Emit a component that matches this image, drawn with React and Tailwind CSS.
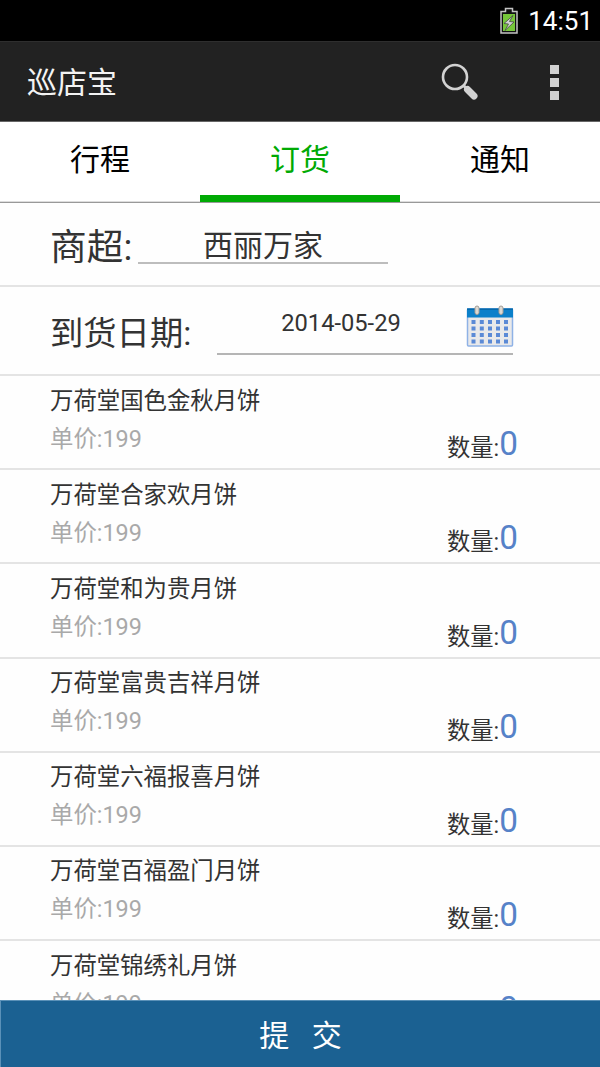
const products = [
  '万荷堂国色金秋月饼',
  '万荷堂合家欢月饼',
  '万荷堂和为贵月饼',
  '万荷堂富贵吉祥月饼',
  '万荷堂六福报喜月饼',
  '万荷堂百福盈门月饼',
  '万荷堂锦绣礼月饼',
];

function Battery() {
  return (
    <svg width="20" height="28" viewBox="0 0 20 28">
      <path d="M6.500 1.500h7v3h4.500v21.500h-16V4.500h4.500z" fill="#111" stroke="#c4c4c4" strokeWidth="1.500" />
      <path d="M4 7h12v17H4z" fill="#76c63a" />
      <path d="M14 8.500 5 16.500l4.500.5-3.500 6.500 9-8.500-4.500-.5z" fill="#d2d2d2" stroke="#444" strokeWidth=".8" />
    </svg>
  );
}

function SearchIcon() {
  return (
    <svg width="40" height="40" viewBox="0 0 40 40" fill="none">
      <circle cx="15" cy="15" r="12" stroke="#d2d2d2" strokeWidth="2.600" />
      <path d="m23 23 4 4" stroke="#d2d2d2" strokeWidth="3" />
      <path d="m27.500 27.500 6.500 6.500" stroke="#d2d2d2" strokeWidth="7" strokeLinecap="round" />
    </svg>
  );
}

function CalendarIcon() {
  return (
    <svg width="48" height="44" viewBox="0 0 48 44">
      <rect x="1.500" y="4" width="45" height="37" rx="1" fill="#e9e9ea" stroke="#8fb2e6" strokeWidth="1.500" />
      <path d="M1 3.500h46v9H1z" fill="#0b80ca" />
      <path d="M1 3.500h46v1.500H1z" fill="#0869ab" />
      {[15, 21.500, 28, 34.500].map((y) =>
        [5.500, 13.800, 22, 30, 38].map((x) => (
          <rect key={`${x}-${y}`} x={x} y={y} width="4" height="4" fill="#5b8ad6" />
        ))
      )}
      <rect x="9" y="1" width="4" height="8.500" rx="2" fill="#dcd9d3" stroke="#a39d95" />
      <rect x="33" y="1" width="4" height="8.500" rx="2" fill="#dcd9d3" stroke="#a39d95" />
    </svg>
  );
}

function ProductRow({ name }) {
  return (
    <li className="flex h-[94.2px] shrink-0 justify-between border-b-2 border-[#e4e4e4] pl-[50px] pr-[82px]">
      <div className="pt-[5.5px] text-[23.4px] leading-[38px]">
        <div>{name}</div>
        <div className="text-[#a9a9a9]">单价:199</div>
      </div>
      <div className="flex items-baseline self-end leading-[40px]">
        <span className="text-[23.3px]">数量:</span>
        <span className="relative -top-px text-[33.3px] text-[#5682c8]">0</span>
      </div>
    </li>
  );
}

export default function App() {
  return (
    <div className="flex h-[1067px] w-[600px] flex-col overflow-hidden bg-[#fefefe] font-['Roboto','Noto_Sans_CJK_SC',sans-serif] text-[#333]">
      <div className="flex h-[41px] shrink-0 items-center justify-end gap-[9px] bg-black pr-[7px] text-[26px] text-white">
        <Battery />
        <span className="pt-[2px]">14:51</span>
      </div>
      <header className="flex h-[81px] shrink-0 items-center border-b border-t border-b-[#666] border-t-[#2e2e2e] bg-[#222] pl-[27px] pr-[41px]">
        <h1 className="grow pt-[2px] text-[30px] leading-[40px] text-[#f3f3f3]">巡店宝</h1>
        <SearchIcon />
        <div className="ml-[70px] flex flex-col gap-[4px] pt-[2px]">
          <i className="size-[9px] bg-[#d2d2d2]" />
          <i className="size-[9px] bg-[#d2d2d2]" />
          <i className="size-[9px] bg-[#d2d2d2]" />
        </div>
      </header>
      <nav className="grid h-[81px] shrink-0 grid-cols-3 bg-[linear-gradient(to_top,#999_1px,#ddd_1px,#ddd_2px,#fff_2px)] text-center text-[30px] leading-[76px] text-black">
        <div>行程</div>
        <div className="h-[80px] border-b-[7px] border-[#00aa04] text-[#00aa04]">订货</div>
        <div>通知</div>
      </nav>
      <div className="flex h-[84px] shrink-0 items-start border-b-2 border-[#e4e4e4] pl-[50px]">
        <label className="w-[88px] text-[36.7px] leading-[90px]">商超:</label>
        <div className="mt-[20px] h-[41px] w-[250px] border-b-2 border-[#bdbdbd] text-center text-[30px] leading-[46px]">西丽万家</div>
      </div>
      <div className="flex h-[89px] shrink-0 items-start border-b-2 border-[#e4e4e4] pl-[50px]">
        <label className="w-[167px] text-[33.3px] leading-[93px]">到货日期:</label>
        <div className="mt-[18px] flex h-[50px] w-[296px] border-b-2 border-[#b5b5b5]">
          <span className="w-[249px] text-center text-[23.7px] leading-[36px]">2014-05-29</span>
          <span className="-mr-px ml-px w-[48px] shrink-0"><CalendarIcon /></span>
        </div>
      </div>
      <ul className="flex min-h-0 grow flex-col overflow-hidden">
        {products.map((name) => (
          <ProductRow key={name} name={name} />
        ))}
      </ul>
      <button className="h-[67px] shrink-0 whitespace-pre border-l border-t border-[#5b91b8] bg-[#1b6192] pt-[3px] text-[30px] leading-[63px] text-white">提   交</button>
    </div>
  );
}
